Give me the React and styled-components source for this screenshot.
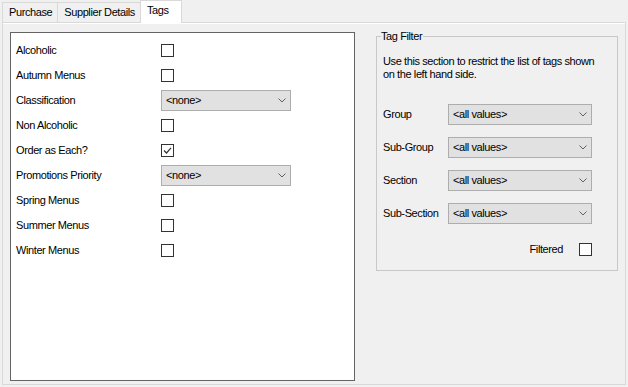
import React from 'react';
import styled, { createGlobalStyle } from 'styled-components';

const GlobalStyle = createGlobalStyle`
  html, body {
    margin: 0;
    padding: 0;
    background: #f0f0f0;
  }
  body {
    font-family: "Liberation Sans", Arial, sans-serif;
    font-size: 11px;
    letter-spacing: -0.4px;
    color: #000;
  }
`;

const tagRows = [
  { label: 'Alcoholic', kind: 'check' },
  { label: 'Autumn Menus', kind: 'check' },
  { label: 'Classification', kind: 'select', value: '<none>' },
  { label: 'Non Alcoholic', kind: 'check' },
  { label: 'Order as Each?', kind: 'check', checked: true },
  { label: 'Promotions Priority', kind: 'select', value: '<none>' },
  { label: 'Spring Menus', kind: 'check' },
  { label: 'Summer Menus', kind: 'check' },
  { label: 'Winter Menus', kind: 'check' },
];

const filterRows = ['Group', 'Sub-Group', 'Section', 'Sub-Section'];

function CheckBox({ checked }) {
  return (
    <Box>
      {checked && (
        <svg width="11" height="11" viewBox="0 0 11 11">
          <path d="M2 5.5 L4.5 8 L9 2.8" fill="none" stroke="#333" strokeWidth="1.2" />
        </svg>
      )}
    </Box>
  );
}

function Combo({ value, width }) {
  return (
    <Select $width={width}>
      <span>{value}</span>
      <svg width="8" height="5" viewBox="0 0 8 5">
        <path d="M0.5 0.5 L4 4 L7.5 0.5" fill="none" stroke="#606060" strokeWidth="1" />
      </svg>
    </Select>
  );
}

export default function App() {
  return (
    <Window>
      <GlobalStyle />
      <TabStrip>
        <Tab>Purchase</Tab>
        <Tab>Supplier Details</Tab>
        <Tab $active>Tags</Tab>
      </TabStrip>
      <TabPage>
        <ListBox>
          {tagRows.map((row) => (
            <TagRow key={row.label}>
              <TagLabel>{row.label}</TagLabel>
              {row.kind === 'check' ? (
                <CheckBox checked={row.checked} />
              ) : (
                <Combo value={row.value} width={130} />
              )}
            </TagRow>
          ))}
        </ListBox>
        <GroupBox>
          <Legend>Tag Filter</Legend>
          <Description>
            Use this section to restrict the list of tags shown
            <br />
            on the left hand side.
          </Description>
          <FilterList>
            {filterRows.map((name) => (
              <FilterRow key={name}>
                <FilterLabel>{name}</FilterLabel>
                <Combo value="<all values>" width={144} />
              </FilterRow>
            ))}
          </FilterList>
          <FilteredRow>
            <span>Filtered</span>
            <CheckBox />
          </FilteredRow>
        </GroupBox>
      </TabPage>
    </Window>
  );
}

const Window = styled.div`
  width: 628px;
  height: 387px;
  overflow: hidden;
  display: flex;
  flex-direction: column;
`;

const TabStrip = styled.div`
  display: flex;
  align-items: flex-end;
  height: 22px;
  padding-left: 2px;
  position: relative;
  z-index: 1;
`;

const Tab = styled.div`
  box-sizing: border-box;
  height: ${(p) => (p.$active ? '23px' : '20px')};
  margin-bottom: ${(p) => (p.$active ? '-1px' : '0')};
  margin-left: -1px;
  padding: ${(p) => (p.$active ? '3px 12px 0 6px' : '3px 5px 0 6px')};
  border: 1px solid #d9d9d9;
  border-bottom: none;
  background: ${(p) => (p.$active ? '#fff' : '#f0f0f0')};
  line-height: 13px;
  white-space: nowrap;

  &:first-child {
    margin-left: 0;
  }
`;

const TabPage = styled.div`
  box-sizing: border-box;
  margin: 0 2px;
  height: 363px;
  border: 1px solid #d9d9d9;
  box-shadow: inset 0 1px 0 #fff;
  display: flex;
  align-items: flex-start;
  padding: 9px 0 0 7px;
`;

const ListBox = styled.div`
  box-sizing: border-box;
  width: 345px;
  height: 349px;
  background: #fff;
  border: 1px solid #646464;
  padding: 5px 0 0 5px;
  display: flex;
  flex-direction: column;
`;

const TagRow = styled.div`
  display: flex;
  align-items: center;
  height: 25px;
`;

const TagLabel = styled.span`
  width: 145px;
  line-height: 13px;
  white-space: nowrap;
`;

const Box = styled.div`
  box-sizing: border-box;
  width: 13px;
  height: 13px;
  border: 1px solid #333;
  background: #fff;
  display: flex;
  align-items: center;
  justify-content: center;
`;

const Select = styled.div`
  box-sizing: border-box;
  width: ${(p) => p.$width}px;
  height: 21px;
  background: #e1e1e1;
  border: 1px solid #adadad;
  display: flex;
  align-items: center;
  justify-content: space-between;
  padding: 0 4px 0 4px;
  line-height: 13px;
  white-space: nowrap;

  svg {
    flex: none;
    margin-right: 0;
  }
`;

const GroupBox = styled.div`
  position: relative;
  box-sizing: border-box;
  width: 242px;
  height: 235px;
  margin: 4px 0 0 21px;
  border: 1px solid #c8c8c8;
  padding: 18px 25px 0 6px;
  display: flex;
  flex-direction: column;
`;

const Legend = styled.span`
  position: absolute;
  top: -7px;
  left: 4px;
  padding: 0 1px 0 0;
  background: #f0f0f0;
  line-height: 13px;
`;

const Description = styled.p`
  margin: 0;
  line-height: 13px;
  white-space: nowrap;
`;

const FilterList = styled.div`
  display: flex;
  flex-direction: column;
  gap: 12px;
  margin-top: 23px;
`;

const FilterRow = styled.div`
  display: flex;
  align-items: center;
`;

const FilterLabel = styled.span`
  width: 65px;
  line-height: 13px;
  white-space: nowrap;
`;

const FilteredRow = styled.div`
  display: flex;
  align-items: center;
  justify-content: flex-end;
  gap: 16px;
  margin-top: 19px;
  line-height: 13px;
`;
